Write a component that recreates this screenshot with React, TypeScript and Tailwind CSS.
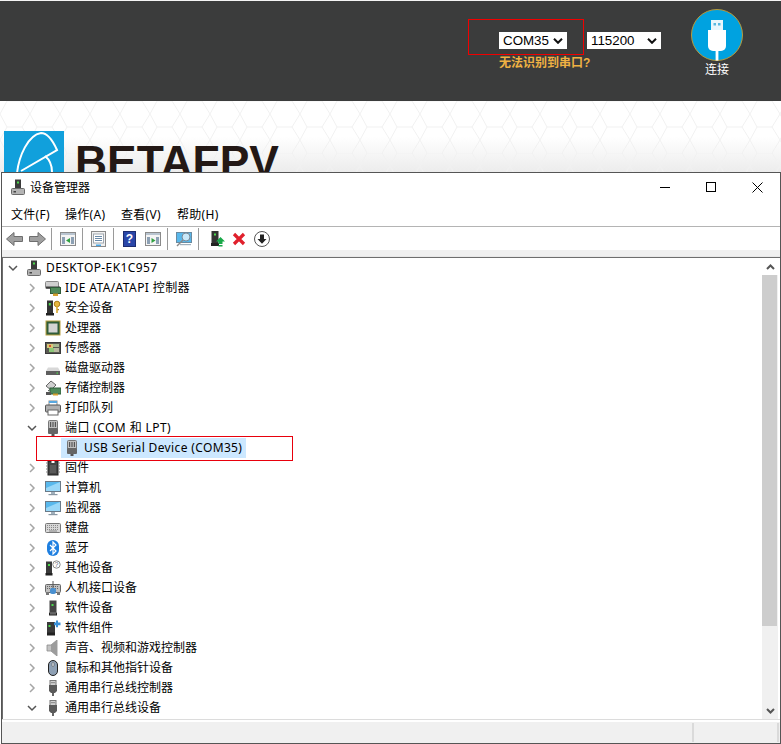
import React from "react";

type Ic = React.ReactNode;
const S = ({ children, w = 16, h = 16, vb }: { children: React.ReactNode; w?: number; h?: number; vb?: string }) => (
  <svg width={w} height={h} viewBox={vb ?? `0 0 ${w} ${h}`} className="shrink-0" shapeRendering="geometricPrecision">
    {children}
  </svg>
);

const tower = (
  <>
    <rect x="5" y="0.5" width="6" height="10" fill="#3a3a3a" />
    <rect x="7" y="2.5" width="2" height="2" fill="#4bd84b" />
    <rect x="1.5" y="9.5" width="13" height="6" rx="1" fill="#b4b4b4" stroke="#6a6a6a" />
    <rect x="3.5" y="12" width="2.5" height="1.5" fill="#444" />
  </>
);

const icons: Record<string, Ic> = {
  desktop: <S>{tower}</S>,
  ide: (
    <S>
      <rect x="0.5" y="1.5" width="13" height="7" rx="1" fill="#cfcfcf" stroke="#8a8a8a" />
      <rect x="1" y="6.5" width="14" height="2" fill="#3a3a3a" />
      <rect x="5.5" y="7.5" width="10" height="6" fill="#4f8a5a" stroke="#2f5c3a" />
      <rect x="8" y="13.5" width="5" height="2.5" fill="#d4a030" />
    </S>
  ),
  security: (
    <S>
      <rect x="2" y="0.5" width="6" height="13" fill="#333" />
      <rect x="3.8" y="3" width="2" height="2.5" fill="#4bd84b" />
      <rect x="1" y="13" width="8" height="2.5" fill="#222" />
      <circle cx="12" cy="4" r="2.8" fill="#e8b840" stroke="#a87c18" />
      <rect x="11.2" y="6" width="1.6" height="7" fill="#d8a830" />
      <rect x="12.5" y="9" width="1.5" height="1.2" fill="#a87c18" />
    </S>
  ),
  cpu: (
    <S>
      <rect x="0.5" y="0.5" width="15" height="15" fill="#b8a040" />
      <rect x="1.5" y="1.5" width="13" height="13" fill="#2f5c3a" />
      <rect x="3.5" y="3.5" width="9" height="9" fill="#d4d4d4" />
    </S>
  ),
  sensor: (
    <S>
      <rect x="0.5" y="2.5" width="15" height="11" fill="#5a5a52" stroke="#3a3a3a" />
      <rect x="2" y="4" width="6" height="4" fill="#d8c878" />
      <rect x="4" y="8" width="5" height="4" fill="#8cc878" />
      <rect x="8" y="4" width="6" height="3" fill="#a8b890" />
      <rect x="9" y="8" width="5" height="4" fill="#b8b8a0" />
      <rect x="4" y="5" width="2" height="2" fill="#d85030" />
    </S>
  ),
  disk: (
    <S>
      <path d="M3 7.5h10l2 3.5H1z" fill="#d8d8d8" />
      <rect x="1" y="11" width="14" height="4" fill="#5e5e5e" />
      <rect x="11.5" y="12.5" width="1.5" height="1.2" fill="#4bd84b" />
    </S>
  ),
  storage: (
    <S>
      <path d="M1 6 6 1l5 4-5 5z" fill="#d0d0d0" stroke="#666" />
      <path d="M3 11l3-2" stroke="#444" fill="none" />
      <rect x="5" y="8" width="11" height="6" fill="#4f8a5a" stroke="#2f5c3a" />
      <rect x="8" y="13.5" width="5" height="2" fill="#d4a030" />
      <rect x="1" y="12" width="5" height="3" fill="#555" />
    </S>
  ),
  printer: (
    <S>
      <rect x="4" y="1" width="8" height="5" fill="#fff" stroke="#8a8a8a" />
      <rect x="4" y="1" width="8" height="2" fill="#58a8e0" />
      <rect x="0.5" y="5" width="15" height="7" rx="1" fill="#b0b0b0" stroke="#555" />
      <rect x="3" y="10" width="10" height="5" fill="#fff" stroke="#666" />
    </S>
  ),
  port: (
    <S>
      <rect x="3.5" y="0.5" width="9" height="9" rx="1" fill="#c0c0c0" stroke="#777" />
      <rect x="5" y="2" width="1.2" height="5" fill="#555" />
      <rect x="7.4" y="2" width="1.2" height="5" fill="#555" />
      <rect x="9.8" y="2" width="1.2" height="5" fill="#555" />
      <rect x="3" y="8" width="10" height="6" rx="1" fill="#666" />
      <rect x="6.5" y="14" width="3" height="2" fill="#555" />
    </S>
  ),
  firmware: (
    <S>
      <rect x="3" y="1" width="10" height="14" fill="#444" stroke="#222" />
      <rect x="6.5" y="1" width="3" height="2" fill="#fff" />
      <path d="M1 3h2M1 6h2M1 9h2M1 12h2M13 3h2M13 6h2M13 9h2M13 12h2" stroke="#888" strokeWidth="1" />
      <rect x="5" y="5" width="6" height="8" fill="#5a5a5a" />
    </S>
  ),
  computer: (
    <S>
      <rect x="0.5" y="1.5" width="15" height="10" fill="#58b8ec" stroke="#6a7a88" />
      <path d="M1 8l14-6v9H1z" fill="#9ad8f8" />
      <rect x="6" y="12" width="4" height="2" fill="#a0b0bc" />
      <rect x="3.5" y="14" width="9" height="1.2" fill="#8a98a4" />
    </S>
  ),
  keyboard: (
    <S>
      <rect x="0.5" y="3.5" width="15" height="9" rx="1" fill="#d8d8d8" stroke="#777" />
      <path d="M2 5.5h12M2 7.5h12M2 9.5h12" stroke="#8a8a8a" strokeDasharray="1 1" />
      <rect x="4" y="10.5" width="8" height="1" fill="#888" />
    </S>
  ),
  bluetooth: (
    <S>
      <rect x="2" y="0" width="12" height="16" rx="6" fill="#1e7fe0" />
      <path d="M5 5l6 6-3 3V2l3 3-6 6" fill="none" stroke="#fff" strokeWidth="1.2" />
    </S>
  ),
  other: (
    <S>
      <rect x="1" y="1.5" width="6" height="12" fill="#3a3a3a" />
      <rect x="3" y="4" width="2" height="2" fill="#4bd84b" />
      <rect x="0.5" y="13" width="7" height="2.5" fill="#222" />
      <circle cx="11.5" cy="4.5" r="3.7" fill="#fff" stroke="#8a8a8a" />
      <text x="11.5" y="7" textAnchor="middle" fontSize="7" fill="#667" fontFamily="Liberation Sans, sans-serif">?</text>
    </S>
  ),
  hid: (
    <S>
      <rect x="0.5" y="4.5" width="15" height="8" rx="1" fill="#c0c0c0" stroke="#666" />
      <path d="M2 6.5h12M2 8.5h12" stroke="#666" strokeDasharray="1 1" />
      <path d="M8 1v7" stroke="#555" />
      <rect x="5" y="8" width="6" height="6" rx="2" fill="#4a90d0" />
      <rect x="1" y="12" width="3" height="3" fill="#777" />
      <rect x="12" y="12" width="3" height="3" fill="#777" />
    </S>
  ),
  softdev: (
    <S>
      <rect x="4.5" y="0.5" width="7" height="12" fill="#444" />
      <rect x="6.5" y="4" width="2" height="2" fill="#4bd84b" />
      <rect x="4" y="12.5" width="8" height="3" fill="#222" />
      <rect x="5" y="13.5" width="6" height="0.8" fill="#aaa" />
    </S>
  ),
  softcomp: (
    <S>
      <rect x="2" y="2" width="8" height="11" fill="#3a3a3a" />
      <rect x="3.5" y="5" width="2" height="2" fill="#4bd84b" />
      <rect x="2" y="12.5" width="8" height="3" fill="#222" />
      <path d="M11 0.5h2v2h2.5v2.8H13v2h-2V5.3H9V2.5h2z" fill="#3a90d8" />
    </S>
  ),
  sound: (
    <S>
      <path d="M2 5h4l6-5v16l-6-5H2z" fill="#c4c4c4" stroke="#8a8a8a" strokeWidth="0.8" />
      <path d="M6 5l6-5v16l-6-5z" fill="#9c9c9c" />
    </S>
  ),
  mouse: (
    <S>
      <rect x="3.5" y="0.5" width="9" height="15" rx="4.5" fill="#8ea0b4" stroke="#222" />
      <rect x="7" y="2.5" width="2" height="4" rx="1" fill="#dfe6ee" stroke="#555" strokeWidth="0.6" />
    </S>
  ),
  usb: (
    <S>
      <rect x="5" y="0.5" width="6" height="5" fill="#d0d0d0" stroke="#777" />
      <rect x="6.5" y="2" width="1" height="1.2" fill="#555" />
      <rect x="8.5" y="2" width="1" height="1.2" fill="#555" />
      <path d="M4 5h8v6l-2 2H6l-2-2z" fill="#5a5a5a" />
      <rect x="7" y="13" width="2" height="3" fill="#666" />
    </S>
  ),
};

const Chev = ({ open }: { open?: boolean }) => (
  <svg width="10" height="10" viewBox="0 0 10 10" className="shrink-0">
    {open ? (
      <path d="M1 3l4 4 4-4" fill="none" stroke="#555" strokeWidth="1.5" />
    ) : (
      <path d="M3 1l4 4-4 4" fill="none" stroke="#a6a6a6" strokeWidth="1.5" />
    )}
  </svg>
);

const rows: { t: string; i: string; open?: boolean }[] = [
  { t: "IDE ATA/ATAPI 控制器", i: "ide" },
  { t: "安全设备", i: "security" },
  { t: "处理器", i: "cpu" },
  { t: "传感器", i: "sensor" },
  { t: "磁盘驱动器", i: "disk" },
  { t: "存储控制器", i: "storage" },
  { t: "打印队列", i: "printer" },
  { t: "端口 (COM 和 LPT)", i: "port", open: true },
  { t: "USB", i: "port" },
  { t: "固件", i: "firmware" },
  { t: "计算机", i: "computer" },
  { t: "监视器", i: "computer" },
  { t: "键盘", i: "keyboard" },
  { t: "蓝牙", i: "bluetooth" },
  { t: "其他设备", i: "other" },
  { t: "人机接口设备", i: "hid" },
  { t: "软件设备", i: "softdev" },
  { t: "软件组件", i: "softcomp" },
  { t: "声音、视频和游戏控制器", i: "sound" },
  { t: "鼠标和其他指针设备", i: "mouse" },
  { t: "通用串行总线控制器", i: "usb" },
  { t: "通用串行总线设备", i: "usb", open: true },
];

const Sep = () => <div className="w-px h-[22px] bg-[#9a9a9a]" />;

const Arrow = ({ flip }: { flip?: boolean }) => (
  <svg width="17" height="14" viewBox="0 0 17 14" className="shrink-0" style={flip ? { transform: "scaleX(-1)" } : undefined}>
    <path d="M0.5 7l7.5-6.5v4h8.5v5H8v4z" fill="#a0a0a0" stroke="#6e6e6e" />
  </svg>
);

const Panel = ({ arrow, right }: { arrow: string; right?: boolean }) => (
  <svg width="16" height="14" viewBox="0 0 16 14" className="shrink-0">
    <rect x="0.5" y="0.5" width="15" height="13" fill="#f4f4f4" stroke="#8a8a8a" />
    <rect x="1" y="1" width="14" height="2" fill="#b8c4d0" />
    <rect x="2" y="5" width="3" height="7" fill="#8ca0b4" />
    <rect x="11" y="5" width="3" height="7" fill="#8ca0b4" />
    <path d={right ? "M6.5 6l4 2.5-4 2.5z" : "M10 6l-4 2.5 4 2.5z"} fill={arrow} />
  </svg>
);

const Toolbar = () => (
  <div className="h-[23px] flex items-center pl-[4px] bg-white">
    <Arrow />
    <div className="w-[6px]" />
    <Arrow flip />
    <div className="w-[5px]" />
    <Sep />
    <div className="w-[8px]" />
    <Panel arrow="#30a040" />
    <div className="w-[6px]" />
    <Sep />
    <div className="w-[8px]" />
    <svg width="15" height="16" viewBox="0 0 15 16" className="shrink-0">
      <rect x="0.5" y="0.5" width="14" height="15" fill="#f0f0f0" stroke="#8a8a8a" />
      <rect x="2.5" y="3" width="10" height="9" fill="#fff" stroke="#a0a8b0" />
      <path d="M4 5.5h7M4 7.5h7M4 9.5h7" stroke="#6a8aa8" />
      <rect x="5" y="13.5" width="5" height="1.5" fill="#48a8e8" />
    </svg>
    <div className="w-[7px]" />
    <Sep />
    <div className="w-[9px]" />
    <div className="w-[13px] h-[16px] bg-[#2a46a8] border border-[#1c2c70] flex items-center justify-center text-white text-[12px] font-bold leading-none font-['Liberation_Sans',sans-serif]">
      ?
    </div>
    <div className="w-[9px]" />
    <Panel arrow="#30a040" right />
    <div className="w-[6px]" />
    <Sep />
    <div className="w-[8px]" />
    <svg width="17" height="16" viewBox="0 0 17 16" className="shrink-0">
      <rect x="0.5" y="1.5" width="15" height="10" fill="#58b8ec" stroke="#6a8aa0" />
      <circle cx="10" cy="6" r="4" fill="#c8e8fa" stroke="#7a8a98" />
      <path d="M7 9l-6 6" stroke="#888" strokeWidth="1.5" />
      <rect x="4" y="13" width="11" height="1.2" fill="#a0b0bc" />
    </svg>
    <div className="w-[5px]" />
    <Sep />
    <div className="w-[12px]" />
    <svg width="14" height="16" viewBox="0 0 14 16" className="shrink-0">
      <rect x="0.5" y="0" width="7" height="12" fill="#333" />
      <rect x="3" y="2.5" width="2" height="2" fill="#4bd84b" />
      <rect x="0" y="12" width="8" height="3" fill="#222" />
      <path d="M9.5 6l4.5 4.5h-2.5V13h-4v-2.5H5z" fill="#18a848" />
      <rect x="7.5" y="14" width="4" height="1.5" fill="#18a848" />
    </svg>
    <div className="w-[7px]" />
    <svg width="14" height="14" viewBox="0 0 14 14" className="shrink-0">
      <path d="M2 2l10 10M12 2L2 12" stroke="#e0202c" strokeWidth="3.2" />
    </svg>
    <div className="w-[8px]" />
    <svg width="16" height="16" viewBox="0 0 16 16" className="shrink-0">
      <circle cx="8" cy="8" r="7.5" fill="#fff" stroke="#555" />
      <path d="M6 3.5h4V8h2.5L8 12.8 3.5 8H6z" fill="#222" />
    </svg>
  </div>
);

const Select = ({ w, label }: { w: string; label: string }) => (
  <div className={`${w} h-[17px] bg-white flex items-center justify-between pl-[4px] pr-[4px] text-[13.33px] leading-none text-black`}>
    <span>{label}</span>
    <svg width="10" height="6" viewBox="0 0 10 6">
      <path d="M1 0.8l4 4 4-4" fill="none" stroke="#111" strokeWidth="2" />
    </svg>
  </div>
);

export default function App() {
  return (
    <div className="relative w-[781px] h-[744px] overflow-hidden bg-white font-['Liberation_Sans','Noto_Sans_CJK_SC',sans-serif]">
      <div className="h-[1px] bg-[#f4f4f4]" />
      <header className="relative h-[100px] bg-[#3b3c3c]">
        <div className="flex gap-[20px] pl-[499px] pt-[8px]">
          <div className="flex flex-col pt-[23px]">
            <div className="flex gap-[20px]">
              <Select w="w-[68px]" label="COM35" />
              <Select w="w-[74px]" label="115200" />
            </div>
            <span className="mt-[7px] text-[12px] leading-[14px] font-bold text-[#efb143]">无法识别到串口?</span>
          </div>
          <div className="flex flex-col items-center ml-[10px]">
            <svg width="52" height="52" viewBox="0 0 52 52" className="shrink-0">
              <circle cx="26" cy="26" r="25.5" fill="#00a2e0" stroke="#b89a3a" />
              <rect x="20" y="11" width="12" height="10" fill="#e8f6fc" />
              <rect x="22.5" y="14" width="2.5" height="2.5" fill="#58b8e0" />
              <rect x="27" y="14" width="2.5" height="2.5" fill="#58b8e0" />
              <path d="M17 21h18v16a5 5 0 0 1-5 5h-8a5 5 0 0 1-5-5z" fill="#fff" />
              <rect x="24.6" y="42" width="2.8" height="9.6" fill="#fff" />
            </svg>
            <span className="mt-[1px] text-[12px] leading-[16px] text-white">连接</span>
          </div>
        </div>
        <div className="absolute left-[468px] top-[18px] w-[116px] h-[36px] border border-[#f00000]" />
      </header>

      <div className="relative h-[71px] bg-gradient-to-b from-white from-50% to-[#ececec]">
        <svg className="absolute inset-0" width="781" height="71">
          <defs>
            <pattern id="hex" width="30" height="52" patternUnits="userSpaceOnUse">
              <path d="M7 0l-7 13 7 13h15l8-13-8-13zM7 26L0 39l7 13M22 26l8 13-8 13" fill="none" stroke="#f1f1f1" />
            </pattern>
          </defs>
          <rect width="781" height="71" fill="url(#hex)" />
        </svg>
        <div className="absolute left-[4px] top-[30px] flex items-start gap-[11px]">
          <div className="w-[60px] h-[42px] bg-[#11a0dc] shrink-0">
            <svg width="60" height="42" viewBox="0 0 60 42">
              <path d="M13 42C15 25 24 4 37 2c7 0 12 8 16 17L17 40" fill="none" stroke="#fff" strokeWidth="2" />
              <path d="M41 25c5 4 7 10 7 16" fill="none" stroke="#fff" strokeWidth="2" />
            </svg>
          </div>
          <span className="mt-[9px] text-[44.4px] leading-[44px] font-bold text-[#231815] font-['Liberation_Sans',sans-serif]">BETAFPV</span>
        </div>
      </div>

      <section className="absolute left-[1px] top-[172px] w-[780px] h-[572px] flex flex-col bg-white border border-[#555] text-[12px] text-black font-['Noto_Sans','Noto_Sans_CJK_SC',sans-serif]">
        <div className="h-[32px] pb-[4px] flex items-center shrink-0">
          <div className="pl-[8px] flex items-center gap-[4px]">
            <S>{tower}</S>
            <span className="pt-[2px] text-[12px]">设备管理器</span>
          </div>
          <div className="ml-auto flex items-center">
            <div className="w-[46px] flex items-center justify-center">
              <div className="w-[10px] h-px bg-black" />
            </div>
            <div className="w-[46px] flex items-center justify-center">
              <div className="w-[10px] h-[10px] border border-black" />
            </div>
            <div className="w-[46px] flex items-center justify-center">
              <svg width="11" height="11" viewBox="0 0 11 11">
                <path d="M0.5 0.5l10 10M10.5 0.5l-10 10" stroke="#000" fill="none" />
              </svg>
            </div>
          </div>
        </div>
        <nav className="h-[19px] pb-[2px] shrink-0 flex items-center pl-[9px] border-b border-[#b4b4b4] box-content tracking-[0.3px]">
          <span className="w-[54px]">文件(F)</span>
          <span className="w-[56px]">操作(A)</span>
          <span className="w-[56px]">查看(V)</span>
          <span>帮助(H)</span>
        </nav>
        <Toolbar />
        <div className="h-[7px] shrink-0 bg-[#f0f0f0] border-b border-[#e8e8e8]" />
        <div className="h-px shrink-0 bg-[#6e6e6e]" />

        <div className="flex-1 min-h-0 flex">
          <div className="flex-1 border-l border-[#6e6e6e] overflow-hidden pl-[5px]">
            <div className="h-[20px] flex items-center">
              <Chev open />
              <div className="ml-[8px]">{icons.desktop}</div>
              <span className="ml-[4px] tracking-[0.4px]">DESKTOP-EK1C957</span>
            </div>
            {rows.map((r) =>
              r.t === "USB" ? (
                <div key={r.t} className="relative h-[20px] flex items-center pl-[53px]">
                  <div className="h-[20px] w-[185px] bg-[#cce8ff] flex items-center pl-[3px] gap-[4px]">
                    {icons.port}
                    <span className="tracking-[0.36px]">USB Serial Device (COM35)</span>
                  </div>
                  <div className="absolute left-[28px] top-[-2px] w-[257px] h-[25px] border border-[#e8000c]" />
                </div>
              ) : (
                <div key={r.t} className="h-[20px] flex items-center pl-[19px]">
                  <Chev open={r.open} />
                  <div className="ml-[8px]">{icons[r.i]}</div>
                  <span className={`ml-[4px] whitespace-nowrap ${/[A-Z]/.test(r.t) ? "tracking-[0.4px]" : "tracking-normal"}`}>{r.t}</span>
                </div>
              )
            )}
          </div>
          <div className="w-[16px] shrink-0 bg-[#f0f0f0] flex flex-col">
            <div className="h-[17px] bg-white flex items-center justify-center">
              <svg width="9" height="6" viewBox="0 0 9 6">
                <path d="M1 5l3.5-3.5L8 5" fill="none" stroke="#555" strokeWidth="2" />
              </svg>
            </div>
            <div className="h-[351px] w-[15px] bg-[#cdcdcd]" />
            <div className="flex-1" />
            <div className="h-[17px] flex items-center justify-center">
              <svg width="9" height="6" viewBox="0 0 9 6">
                <path d="M1 1l3.5 3.5L8 1" fill="none" stroke="#555" strokeWidth="2" />
              </svg>
            </div>
          </div>
          <div className="w-[2px] shrink-0" />
        </div>

        <div className="h-px shrink-0 bg-[#dcdcdc]" />
        <div className="h-[2px] shrink-0 bg-white" />
        <footer className="h-[21px] shrink-0 bg-[#f0f0f0] flex justify-end">
          <div className="w-[87px] border-l-2 border-r-2 border-[#dadada] mr-[1px] my-[1px]" />
        </footer>
      </section>
    </div>
  );
}
